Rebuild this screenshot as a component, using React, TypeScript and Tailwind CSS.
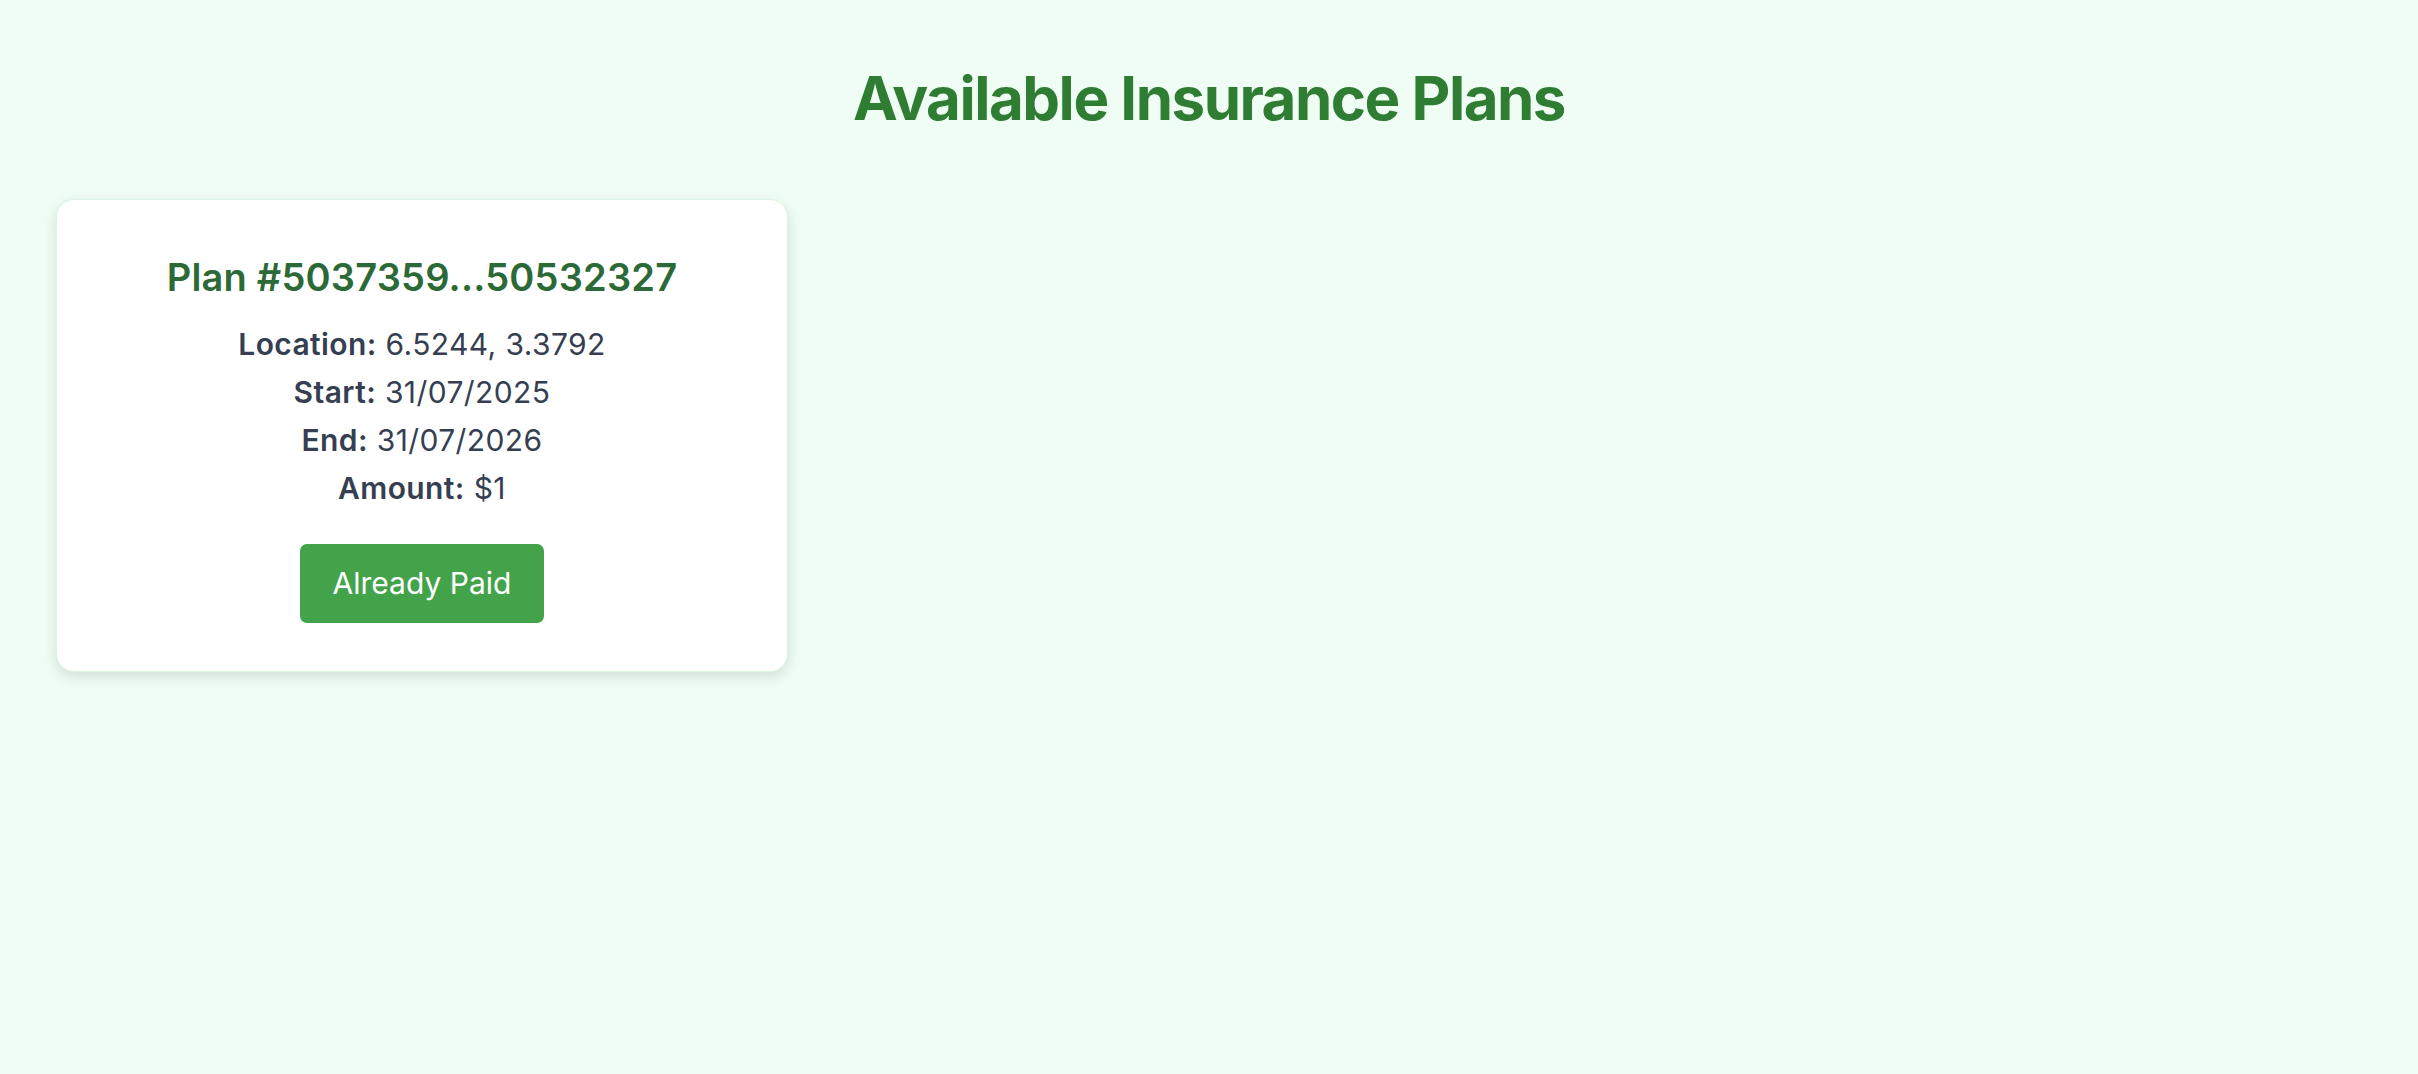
import React from "react";

export default function App() {
  const rows: [string, string][] = [
    ["Location:", "6.5244, 3.3792"],
    ["Start:", "31/07/2025"],
    ["End:", "31/07/2026"],
    ["Amount:", "$1"],
  ];
  return (
    <div
      className="min-h-screen w-full bg-[#f0fdf4] px-[56px]"
      style={{ fontFamily: 'Inter, "Noto Sans", sans-serif' }}
    >
      <h1 className="pt-[62px] text-center text-[60px] font-bold leading-[72px] text-[#2e7d32] tracking-[-1.5px]">
        Available Insurance Plans
      </h1>
      <div className="mt-[65px] grid grid-cols-[732px]">
        <div className="flex flex-col items-center rounded-[18px] border border-[#dcf5e3] bg-white pt-[54px] pb-[48px] shadow-[0_5px_14px_rgba(0,0,0,0.12)]">
          <h3 className="text-[38px] font-semibold leading-[46px] text-[#2b6a36] tracking-[0.2px]">
            Plan #5037359...50532327
          </h3>
          <div className="mt-[20px] flex flex-col items-center text-[30px] leading-[48px] text-[#363f52] tracking-[0.4px]">
            {rows.map(([k, v]) => (
              <p key={k}>
                <span className="font-semibold">{k}</span> {v}
              </p>
            ))}
          </div>
          <button className="mt-[32px] h-[79px] rounded-[7px] bg-[#43a34b] px-[33px] text-[30px] leading-[45px] text-white">
            Already Paid
          </button>
        </div>
      </div>
    </div>
  );
}
